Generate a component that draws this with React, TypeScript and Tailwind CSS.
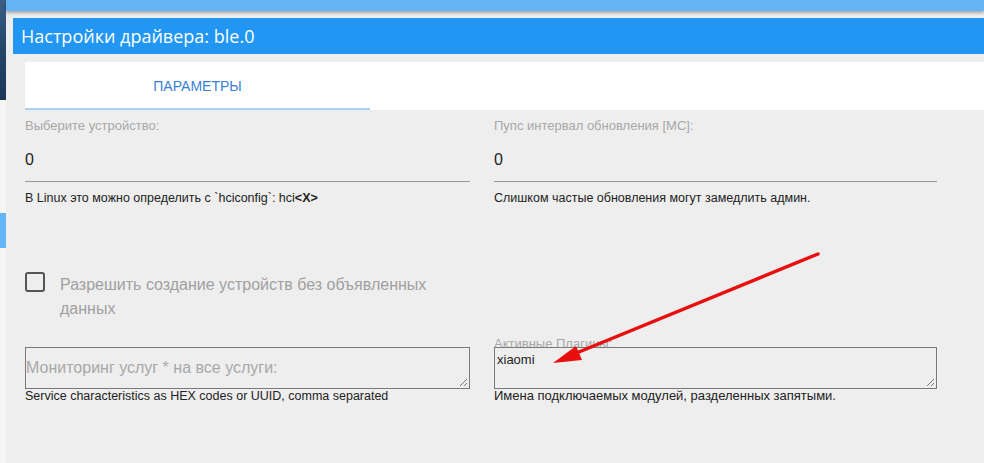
import React from "react";

export default function App() {
  const arial = { fontFamily: '"Liberation Sans", Arial, sans-serif' };
  return (
    <div className="relative w-[984px] h-[463px] overflow-hidden flex bg-[#eeeeee]" style={arial}>
      {/* left strip */}
      <div className="w-[6px] flex flex-col shrink-0 bg-[#f5f5f5]">
        <div className="h-[100px] bg-gradient-to-b from-[#3b5f86] via-[#24466b] to-[#1c3656]" />
        <div className="h-[113px]" />
        <div className="h-[35px] bg-[#64b5f6]" />
      </div>
      {/* main */}
      <div className="flex-1 flex flex-col">
        <div className="h-[11px] bg-[#64b5f6] shadow-[0_2px_3px_rgba(0,0,0,0.3)] relative z-10" />
        <div className="pl-[7px] pt-[7px]">
          <div className="h-[36px] bg-[#2196f3] flex items-center pl-[8px]">
            <span className="text-white text-[18px]" style={{ fontFamily: '"Open Sans", "Noto Sans", sans-serif' }}>
              Настройки драйвера: ble.0
            </span>
          </div>
        </div>
        <div className="pl-[19px] pt-[8px]">
          <div className="h-[48px] bg-white flex">
            <div className="w-[345px] h-full flex flex-col">
              <div className="flex-1 flex items-center justify-center pt-[2px] text-[14px] text-[#3b7fd4]">ПАРАМЕТРЫ</div>
              <div className="h-[2px] bg-[#a9d1f5]" />
            </div>
          </div>
        </div>
        {/* content */}
        <div className="pl-[19px] pr-[47px] pt-[8px] grid grid-cols-[445px_443px] gap-x-[24px]">
          {/* row 1 left */}
          <div className="flex flex-col">
            <div className="h-[16px] text-[13px] leading-[16px] text-[#a8a8a8]">Выберите устройство:</div>
            <div className="pt-[16px] h-[48px] border-b border-[#999] text-[16px] leading-[19px] text-[#222]">0</div>
            <div className="pt-[9px] text-[12.5px] leading-[15px] text-[#222]">
              В Linux это можно определить с `hciconfig`: hci<b>&lt;X&gt;</b>
            </div>
          </div>
          {/* row 1 right */}
          <div className="flex flex-col">
            <div className="h-[16px] text-[13px] leading-[16px] text-[#a8a8a8]">Пупс интервал обновления [МС]:</div>
            <div className="pt-[16px] h-[48px] border-b border-[#999] text-[16px] leading-[19px] text-[#222]">0</div>
            <div className="pt-[9px] text-[12.5px] leading-[15px] text-[#222]">
              Слишком частые обновления могут замедлить админ.
            </div>
          </div>
          {/* row 2 left */}
          <div className="pt-[64px] flex items-start">
            <div className="w-[20px] h-[20px] mt-[2px] border-2 border-[#555] rounded-[3px] shrink-0" />
            <div className="ml-[15px] mt-[3px] text-[16px] leading-[24px] text-[#a0a0a0] w-[400px]">
              Разрешить создание устройств без объявленных данных
            </div>
          </div>
          <div />
          {/* row 3 left */}
          <div className="pt-[26px] flex flex-col">
            <div className="relative h-[42px] border border-[#7a7a7a]">
              <span className="absolute left-0 top-[11px] text-[16px] leading-[18px] text-[#a8a8a8]">Мониторинг услуг * на все услуги:</span>
              <Grip />
            </div>
            <div className="text-[12.5px] leading-[14px] text-[#222]">Service characteristics as HEX codes or UUID, comma separated</div>
          </div>
          {/* row 3 right */}
          <div className="pt-[18px] flex flex-col">
            <div className="h-[8px] relative">
              <span className="absolute top-[-2px] left-0 text-[13px] leading-[14px] text-[#a8a8a8]">Активные Плагины:</span>
            </div>
            <div className="relative h-[42px] border border-[#7a7a7a] pl-[2px] pt-[4px] text-[13px] leading-[16px] text-[#222]">
              xiaomi
              <Grip />
            </div>
            <div className="text-[13px] leading-[14px] text-[#222]">Имена подключаемых модулей, разделенных запятыми.</div>
          </div>
        </div>
      </div>
      {/* red arrow overlay */}
      <svg className="absolute left-0 top-0 pointer-events-none" width="984" height="463" viewBox="0 0 984 463">
        <line x1="818" y1="254" x2="574" y2="354" stroke="#e8100f" strokeWidth="3.5" strokeLinecap="round" />
        <polygon points="553,363 576,346 582,360" fill="#e8100f" />
      </svg>
    </div>
  );
}

function Grip() {
  return (
    <svg className="absolute right-[1px] bottom-[1px]" width="9" height="9" viewBox="0 0 9 9">
      <line x1="8" y1="1" x2="1" y2="8" stroke="#777" strokeWidth="1" />
      <line x1="8" y1="5" x2="5" y2="8" stroke="#777" strokeWidth="1" />
    </svg>
  );
}
